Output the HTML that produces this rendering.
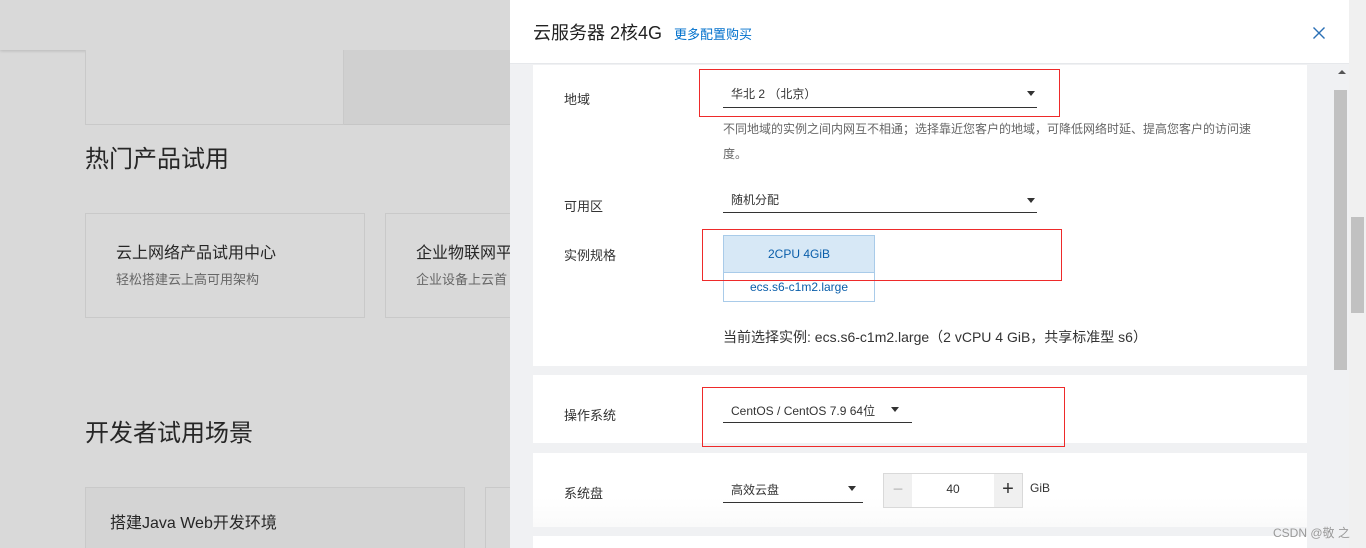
<!DOCTYPE html>
<html><head><meta charset="utf-8">
<style>
*{margin:0;padding:0;box-sizing:border-box}
html,body{width:1366px;height:548px;overflow:hidden}
body{position:relative;background:#d9d9d9;font-family:"Liberation Sans","Noto Sans CJK SC",sans-serif;color:#333}
.abs{position:absolute}
.lt{color:#262626}
.card{position:absolute;border:1px solid #c9c9c9;background:#d9d9d9}
.panel{position:absolute;left:510px;top:0;width:856px;height:548px;background:#f0f1f3;overflow:hidden}
.hdr{position:absolute;left:0;top:0;width:839px;height:64px;background:#fff;border-bottom:1px solid #e6e8eb}
.sec{position:absolute;left:23px;width:774px;background:#fff}
.lbl{position:absolute;font-size:13px;color:#333}
.sel{position:absolute;border-bottom:1px solid #333;font-size:12px;color:#333}
.tri{position:absolute;width:0;height:0;border-left:4px solid transparent;border-right:4px solid transparent;border-top:5px solid #333}
.red{position:absolute;border:1px solid #ee2a2a}
</style></head><body>
<div class="abs" style="left:0;top:0;width:510px;height:50px;background:#d9d9d9;box-shadow:0 1px 3px rgba(0,0,0,.15)"></div>
<div class="card" style="left:85px;top:50px;width:259px;height:75px;border-top:none"></div>
<div class="abs" style="left:344px;top:50px;width:166px;height:75px;background:#d0d0d0;border-bottom:1px solid #c6c6c6"></div>
<div class="abs lt" style="left:85px;top:139px;font-size:24px">热门产品试用</div>
<div class="card" style="left:85px;top:213px;width:280px;height:105px"></div>
<div class="abs lt" style="left:116px;top:239px;font-size:16px">云上网络产品试用中心</div>
<div class="abs" style="left:116px;top:269px;font-size:13px;color:#666">轻松搭建云上高可用架构</div>
<div class="card" style="left:385px;top:213px;width:140px;height:105px"></div>
<div class="abs lt" style="left:416px;top:239px;font-size:16px;white-space:nowrap">企业物联网平</div>
<div class="abs" style="left:416px;top:269px;font-size:13px;color:#666;white-space:nowrap">企业设备上云首</div>
<div class="abs lt" style="left:85px;top:413px;font-size:24px">开发者试用场景</div>
<div class="card" style="left:85px;top:487px;width:380px;height:70px;background:#d4d4d4"></div>
<div class="abs lt" style="left:110px;top:509px;font-size:16px">搭建Java Web开发环境</div>
<div class="card" style="left:485px;top:487px;width:40px;height:70px"></div>

<div class="panel">
 <div class="hdr">
  <div class="abs" style="left:23px;top:19px;font-size:18px;color:#222">云服务器 2核4G</div>
  <div class="abs" style="left:164px;top:24px;font-size:13px;color:#0070cc">更多配置购买</div>
  <svg class="abs" style="left:803px;top:27px" width="12" height="12" viewBox="0 0 12 12"><path d="M0.5 0.5L11.5 11.5M11.5 0.5L0.5 11.5" stroke="#2a6fb5" stroke-width="1.4"/></svg>
 </div>
 <div class="abs" style="left:839px;top:0;width:17px;height:548px;background:#f0f0f0"></div>
 <div class="abs" style="left:841px;top:217px;width:13px;height:96px;background:#c1c1c1"></div>
 <div class="abs" style="left:828px;top:70px;width:0;height:0;border-left:4px solid transparent;border-right:4px solid transparent;border-bottom:4px solid #555"></div>
 <div class="abs" style="left:824px;top:90px;width:13px;height:280px;background:#c1c1c1"></div>

 <div class="sec" style="top:65px;height:301px">
  <div class="lbl" style="left:31px;top:24px">地域</div>
  <div class="sel" style="left:190px;top:20px;width:314px;height:23px"><span style="position:absolute;left:8px;top:0px">华北 2 （北京）</span></div>
  <div class="tri" style="left:494px;top:26px"></div>
  <div style="position:absolute;left:190px;top:52px;width:540px;font-size:12px;color:#666;line-height:25px">不同地域的实例之间内网互不相通；选择靠近您客户的地域，可降低网络时延、提高您客户的访问速度。</div>
  <div class="lbl" style="left:31px;top:131px">可用区</div>
  <div class="sel" style="left:190px;top:126px;width:314px;height:22px"><span style="position:absolute;left:8px;top:0px">随机分配</span></div>
  <div class="tri" style="left:494px;top:133px"></div>
  <div class="lbl" style="left:31px;top:180px">实例规格</div>
  <div class="abs" style="left:190px;top:170px;width:152px;height:67px;border:1px solid #a9cbe9"></div>
  <div class="abs" style="left:190px;top:170px;width:152px;height:38px;background:#d7e8f6;border:1px solid #a9cbe9;color:#0a5eaa;font-size:12px;text-align:center;line-height:36px">2CPU 4GiB</div>
  <div class="abs" style="left:190px;top:215px;width:152px;text-align:center;font-size:12px;color:#0a5eaa">ecs.s6-c1m2.large</div>
  <div class="abs" style="left:190px;top:262px;font-size:14px;color:#333;white-space:nowrap">当前选择实例: ecs.s6-c1m2.large（2 vCPU 4 GiB，共享标准型 s6）</div>
 </div>
 <div class="sec" style="top:375px;height:68px">
  <div class="lbl" style="left:31px;top:30px">操作系统</div>
  <div class="sel" style="left:190px;top:25px;width:189px;height:23px"><span style="position:absolute;left:8px;top:2px;white-space:nowrap">CentOS / CentOS 7.9 64位</span></div>
  <div class="tri" style="left:358px;top:32px"></div>
 </div>
 <div class="sec" style="top:453px;height:74px;background:linear-gradient(#fff 60%,#fafafa)">
  <div class="lbl" style="left:31px;top:30px">系统盘</div>
  <div class="sel" style="left:190px;top:25px;width:140px;height:25px"><span style="position:absolute;left:8px;top:3px">高效云盘</span></div>
  <div class="tri" style="left:315px;top:33px"></div>
  <div class="abs" style="left:350px;top:20px;width:140px;height:35px;border:1px solid #d9d9d9;background:#fff"></div>
  <div class="abs" style="left:351px;top:21px;width:28px;height:33px;background:#f0f0f0;color:#bbb;font-size:18px;text-align:center;line-height:30px">−</div>
  <div class="abs" style="left:461px;top:21px;width:28px;height:33px;background:#f0f0f0;color:#333;font-size:20px;text-align:center;line-height:30px">+</div>
  <div class="abs" style="left:379px;top:29px;width:82px;text-align:center;font-size:12px">40</div>
  <div class="abs" style="left:497px;top:28px;font-size:12px">GiB</div>
 </div>
 <div class="sec" style="top:536px;height:12px"></div>
</div>
<div class="red" style="left:699px;top:69px;width:361px;height:48px"></div>
<div class="red" style="left:702px;top:229px;width:360px;height:52px"></div>
<div class="red" style="left:702px;top:387px;width:363px;height:60px"></div>
<div class="abs" style="left:1273px;top:524px;font-size:12px;color:#999">CSDN @敬 之</div>
</body></html>
